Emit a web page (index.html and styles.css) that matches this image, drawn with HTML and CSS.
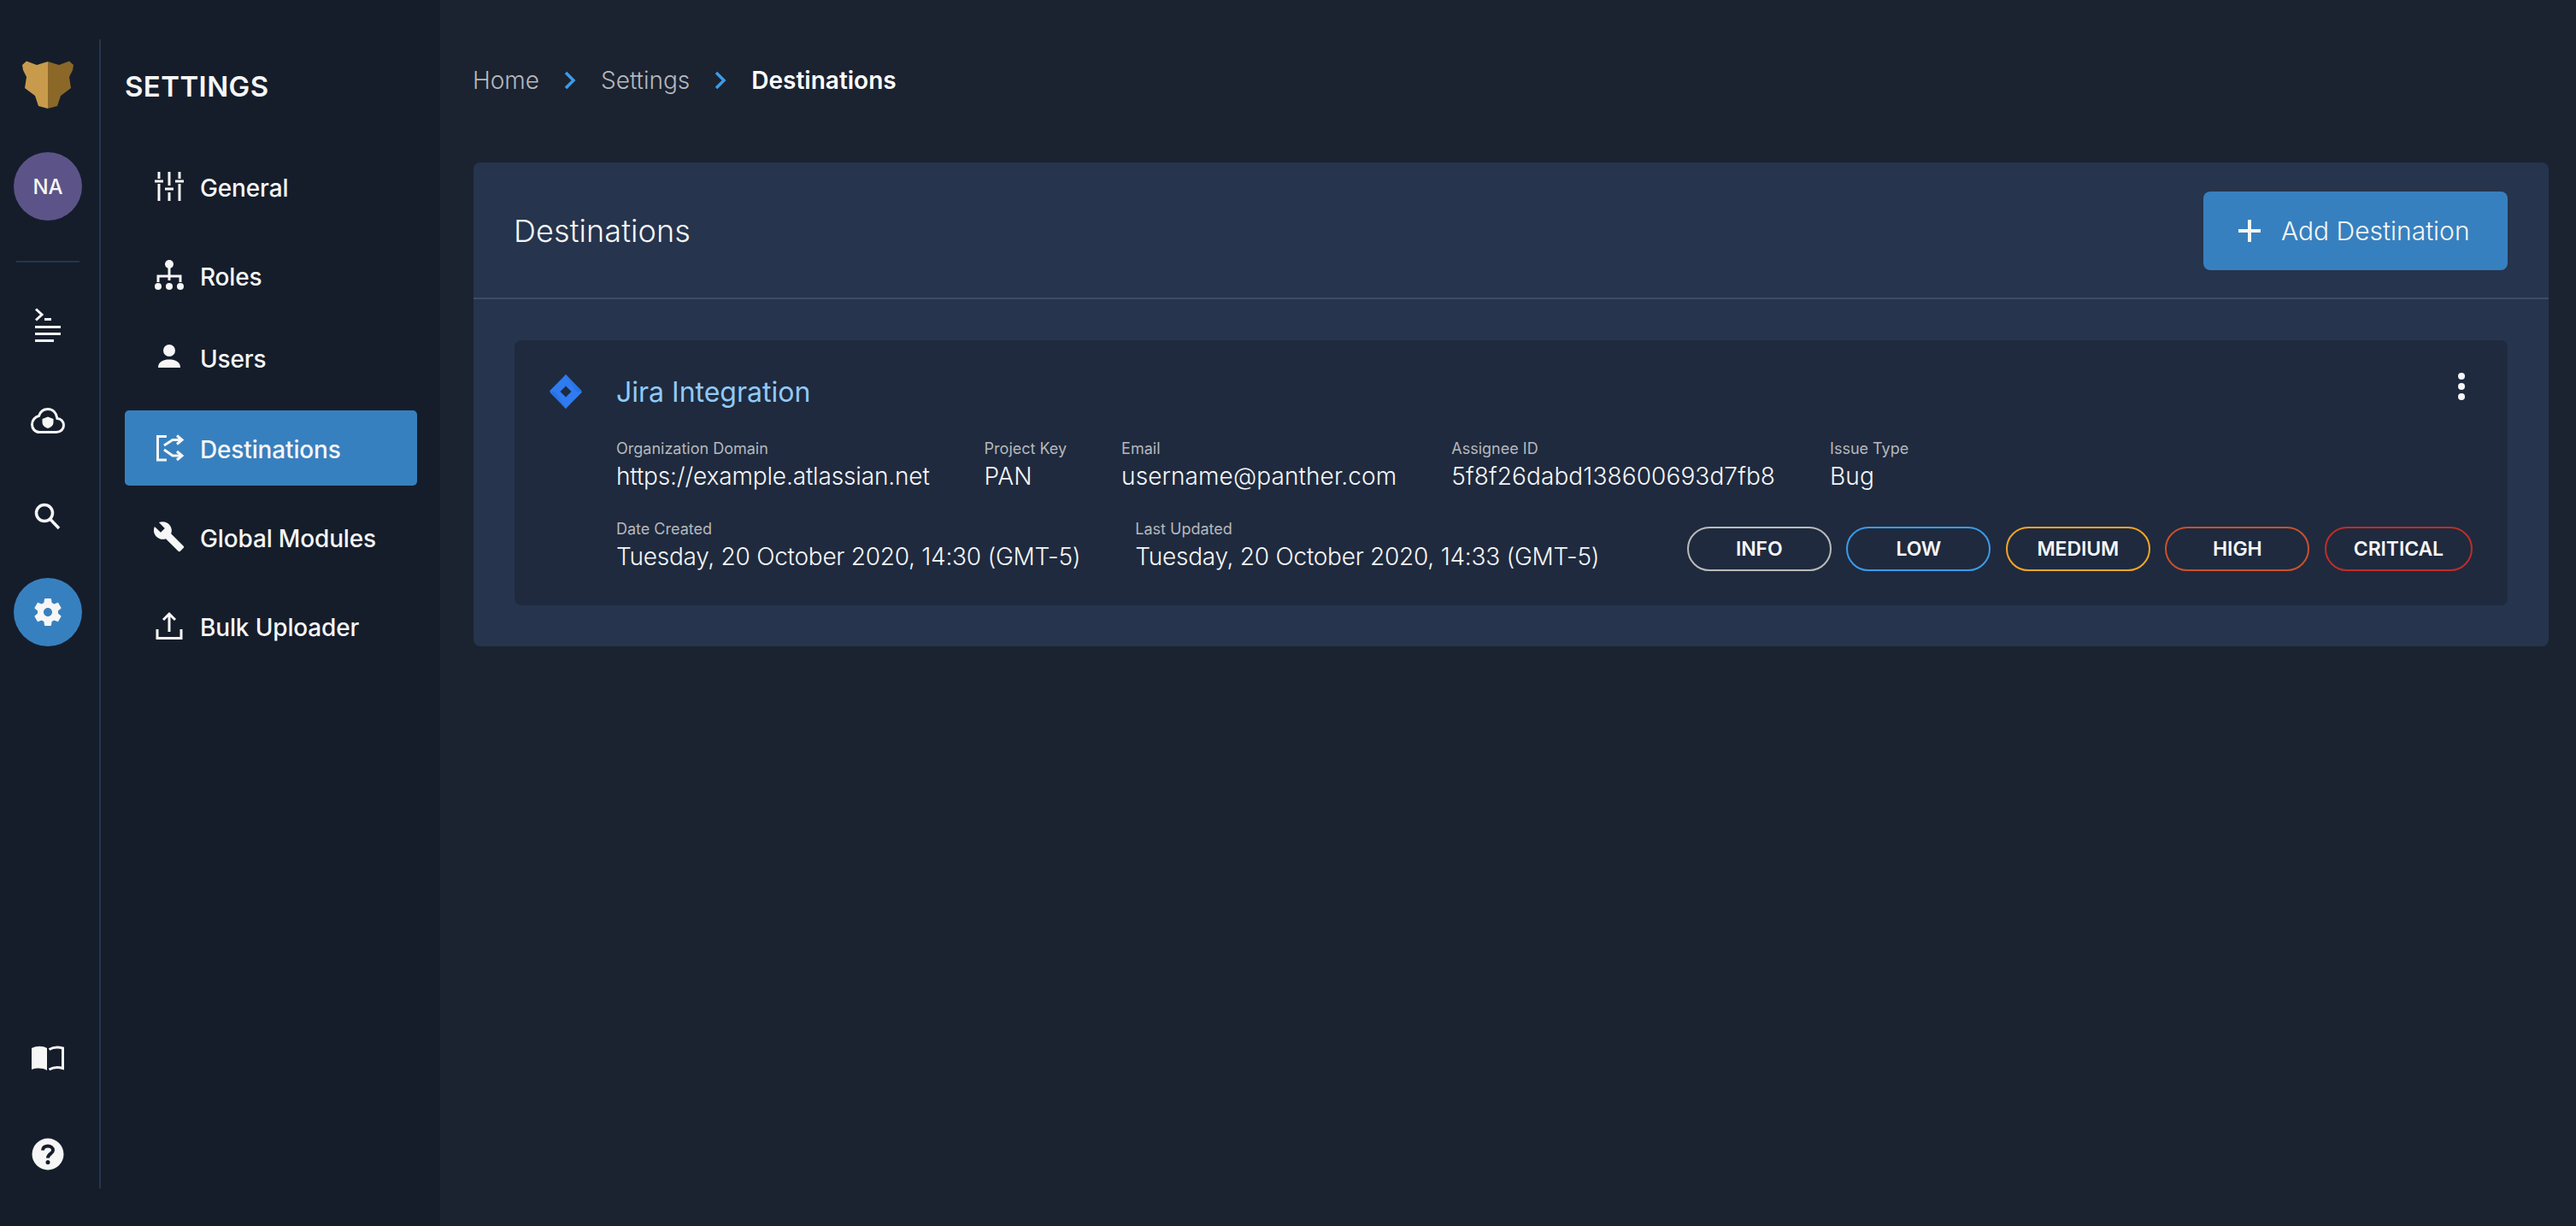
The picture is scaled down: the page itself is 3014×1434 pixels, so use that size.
FILE: index.html
```html
<!DOCTYPE html>
<html>
<head>
	<meta charset="utf-8">
	<title>Destinations</title>
	<link rel="stylesheet" href="styles.css">
</head>
<body>
	<aside class="sidebar">
		<div class="rail">
			<svg class="logo" viewBox="26 71 60 57">
				<path fill="#c89b4c" d="M56 72L43 76 31 71.500 26 76 27 82 31 90 29 103 41 112 45 124 56 127Z"/>
				<path fill="#8b6828" d="M56 72L69 76 81 71.500 86 76 85 82 81 90 83 103 71 112 67 124 56 127Z"/>
			</svg>
			<div class="avatar">NA</div>
			<div class="rail-divider"></div>
			<div class="rail-links">
				<a class="rail-link">
					<svg width="32" height="40" viewBox="0 0 32 40" fill="none" stroke="#f6f6f6" stroke-width="3">
						<path d="M2 1.500L9 8 2 14.500"/>
						<path d="M12 13.500H20M1 22.500H31M1 30.500H31M1 38.500H23"/>
					</svg>
				</a>
				<a class="rail-link">
					<svg width="40" height="30" viewBox="0 0 40 30">
						<path fill="none" stroke="#f6f6f6" stroke-width="3" d="M10 28.500H30C35 28.500 38.500 25 38.500 20.500C38.500 16 35 12.500 31 12.500C30 6 26 1.500 20 1.500C14.500 1.500 11 5 9.500 9.500C5 10.500 1.500 14.500 1.500 19.500C1.500 24.500 5 28.500 10 28.500Z"/>
						<path fill="#f6f6f6" d="M20 10.500L26.500 13V17C26.500 20.500 23.500 23 20 24C16.500 23 13.500 20.500 13.500 17V13Z"/>
					</svg>
				</a>
				<a class="rail-link">
					<svg width="32" height="32" viewBox="0 0 32 32" fill="none" stroke="#f6f6f6" stroke-width="3.500">
						<circle cx="12" cy="12" r="9.500"/>
						<path d="M18.500 19L29 30"/>
					</svg>
				</a>
				<a class="rail-link rail-link-active">
					<svg width="40" height="40" viewBox="0 0 24 24" fill="#f6f6f6">
						<path d="M19.140 12.940c.04-.3.06-.61.06-.94 0-.32-.02-.64-.07-.94l2.030-1.580c.18-.14.23-.41.12-.61l-1.920-3.320c-.12-.22-.37-.29-.59-.22l-2.390.96c-.5-.38-1.030-.7-1.620-.94l-.36-2.540c-.04-.24-.24-.41-.48-.41h-3.840c-.24 0-.43.17-.47.41l-.36 2.540c-.59.24-1.130.57-1.620.94l-2.390-.96c-.22-.08-.47 0-.59.22L2.740 8.870c-.12.21-.08.47.12.61l2.030 1.580c-.05.3-.09.63-.09.94s.02.64.07.94l-2.030 1.580c-.18.14-.23.41-.12.61l1.920 3.320c.12.22.37.29.59.22l2.390-.96c.5.38 1.030.7 1.620.94l.36 2.540c.05.24.24.41.48.41h3.840c.24 0 .44-.17.47-.41l.36-2.540c.59-.24 1.130-.56 1.620-.94l2.390.96c.22.08.47 0 .59-.22l1.920-3.320c.12-.22.07-.47-.12-.61l-2.010-1.580zM12 15c-1.650 0-3-1.350-3-3s1.350-3 3-3 3 1.350 3 3-1.350 3-3 3z"/>
					</svg>
				</a>
			</div>
			<div class="rail-links rail-bottom">
				<a class="rail-link">
					<svg width="38" height="30" viewBox="0 0 38 30">
						<path fill="#f6f6f6" d="M0 3C6 0 13 0 18 3V29C13 26 6 26 0 28Z"/>
						<path fill="none" stroke="#f6f6f6" stroke-width="3" d="M20.500 4.500C25 2 31 1.500 36.500 3V26.500C31 25 25 25.500 20.500 28"/>
					</svg>
				</a>
				<a class="rail-link">
					<svg width="38" height="38" viewBox="0 0 38 38">
						<circle cx="19" cy="19" r="18.500" fill="#f6f6f6"/>
						<path fill="none" stroke="#151d2b" stroke-width="4" d="M13 14.500C13 11 15.800 9.500 19 9.500C22.200 9.500 25 11.300 25 14.500C25 18.500 19 18.500 19 23.500"/>
						<circle cx="19" cy="28.500" r="2.500" fill="#151d2b"/>
					</svg>
				</a>
			</div>
		</div>
		<nav class="settings-nav">
			<h2 class="settings-title">SETTINGS</h2>
			<a class="nav-item">
				<svg class="nav-icon" viewBox="0 0 36 36" fill="none" stroke="#f6f6f6" stroke-width="3">
					<path d="M6 1V9M1 12H11M6 15V35M18 1V17M13 21H23M18 25V35M30 1V9M25 12H35M30 15V35"/>
				</svg>
				General
			</a>
			<a class="nav-item">
				<svg class="nav-icon" viewBox="0 0 36 36" fill="#f6f6f6">
					<circle cx="18" cy="5" r="5"/>
					<circle cx="5" cy="31" r="4"/>
					<circle cx="18" cy="31" r="4"/>
					<circle cx="31" cy="31" r="4"/>
					<path fill="none" stroke="#f6f6f6" stroke-width="3" d="M18 9V24M5 26V19H31V26"/>
				</svg>
				Roles
			</a>
			<a class="nav-item nav-item-tight">
				<svg class="nav-icon" viewBox="0 0 36 36" fill="#f6f6f6">
					<circle cx="18" cy="10" r="7"/>
					<path d="M5 30C5 23 11 20.500 18 20.500C25 20.500 31 23 31 30Z"/>
				</svg>
				Users
			</a>
			<a class="nav-item nav-item-active">
				<svg class="nav-icon" viewBox="0 0 36 36" fill="none" stroke="#f6f6f6" stroke-width="3">
					<path d="M15 4.500H4.500V32H15"/>
					<path d="M12 15L22 8.500H32M12 20L22 27H32"/>
					<path d="M27 3.500L33 8.500 27 13.500M27 22L33 27 27 32"/>
				</svg>
				Destinations
			</a>
			<a class="nav-item">
				<svg class="nav-icon nav-icon-wrench" viewBox="1 1 22.500 22.500" fill="#f6f6f6">
					<path d="M22.700 19l-9.100-9.100c.9-2.300.4-5-1.500-6.900-2-2-5-2.400-7.400-1.300L9 6 6 9 1.600 4.700C.4 7.100.9 10.100 2.900 12.100c1.900 1.900 4.600 2.400 6.900 1.500l9.100 9.100c.4.4 1 .4 1.400 0l2.300-2.300c.5-.4.5-1.100.1-1.400z"/>
				</svg>
				Global Modules
			</a>
			<a class="nav-item">
				<svg class="nav-icon" viewBox="0 0 36 36" fill="none" stroke="#f6f6f6" stroke-width="3">
					<path d="M18 25V4M11 11L18 4 25 11"/>
					<path d="M4 22V32.500H32V22"/>
				</svg>
				Bulk Uploader
			</a>
		</nav>
	</aside>

	<main class="content">
		<div class="breadcrumbs">
			<span class="crumb">Home</span>
			<svg class="crumb-sep" viewBox="0 0 14 22" fill="none" stroke="#3c9be8" stroke-width="3.500"><path d="M2 2L11 11 2 20"/></svg>
			<span class="crumb">Settings</span>
			<svg class="crumb-sep" viewBox="0 0 14 22" fill="none" stroke="#3c9be8" stroke-width="3.500"><path d="M2 2L11 11 2 20"/></svg>
			<span class="crumb crumb-current">Destinations</span>
		</div>

		<section class="panel">
			<header class="panel-head">
				<h1 class="panel-title">Destinations</h1>
				<button class="add-btn">
					<svg width="28" height="28" viewBox="0 0 28 28" stroke="#f6f6f6" stroke-width="4"><path d="M14 1V27M1 14H27"/></svg>
					Add Destination
				</button>
			</header>
			<div class="panel-body">
				<article class="card">
					<svg class="jira-icon" viewBox="0 0 38 40">
						<defs>
							<linearGradient id="jiraA" x1="0.8" y1="0.2" x2="0.3" y2="0.5">
								<stop offset="0" stop-color="#1f5fd0"/>
								<stop offset="1" stop-color="#2f7bf0"/>
							</linearGradient>
							<linearGradient id="jiraB" x1="0.2" y1="0.8" x2="0.7" y2="0.5">
								<stop offset="0" stop-color="#1f5fd0"/>
								<stop offset="1" stop-color="#2f7bf0"/>
							</linearGradient>
						</defs>
						<path fill="#2f7bf0" d="M19 0L37 18.500Q38 20 37 21.500L19 40 1 21.500Q0 20 1 18.500Z"/>
						<path fill="url(#jiraA)" d="M19 0C16 5 16.500 10 19 13.500L25.500 20 37 20Z"/>
						<path fill="url(#jiraB)" d="M19 40C22 35 21.500 30 19 26.500L12.500 20 1 20Z"/>
						<path fill="#2f7bf0" d="M25.500 20H38L37 21.500 30 28.500ZM12.500 20H0L1 18.500 8 11.500Z"/>
						<path fill="#1f2a3e" d="M19 13.500L25.500 20 19 26.500 12.500 20Z"/>
					</svg>
					<div class="card-main">
						<div class="card-head">
							<a class="card-title">Jira Integration</a>
							<svg class="dots" width="8" height="32" viewBox="0 0 8 32" fill="#f6f6f6">
								<circle cx="4" cy="4" r="4"/>
								<circle cx="4" cy="16" r="4"/>
								<circle cx="4" cy="28" r="4"/>
							</svg>
						</div>
						<div class="fields">
							<div class="field"><div class="field-label">Organization Domain</div><div class="field-value field-url">https://example.atlassian.net</div></div>
							<div class="field"><div class="field-label">Project Key</div><div class="field-value">PAN</div></div>
							<div class="field"><div class="field-label">Email</div><div class="field-value">username@panther.com</div></div>
							<div class="field"><div class="field-label">Assignee ID</div><div class="field-value">5f8f26dabd138600693d7fb8</div></div>
							<div class="field"><div class="field-label">Issue Type</div><div class="field-value">Bug</div></div>
						</div>
						<div class="fields fields-bottom">
							<div class="field"><div class="field-label">Date Created</div><div class="field-value">Tuesday, 20 October 2020, 14:30 (GMT-5)</div></div>
							<div class="field"><div class="field-label">Last Updated</div><div class="field-value">Tuesday, 20 October 2020, 14:33 (GMT-5)</div></div>
							<div class="badges">
								<span class="badge badge-info">INFO</span>
								<span class="badge badge-low">LOW</span>
								<span class="badge badge-medium">MEDIUM</span>
								<span class="badge badge-high">HIGH</span>
								<span class="badge badge-critical">CRITICAL</span>
							</div>
						</div>
					</div>
				</article>
			</div>
		</section>
	</main>
</body>
</html>
```

FILE: styles.css
```css
/* Page */

* {
	box-sizing: border-box;
}

html, body {
	height: 100%;
}

body {
	margin: 0;
	display: flex;
	overflow: hidden;
	background-color: #1b2331;
	color: #f6f6f6;
	font-family: "Inter", "Liberation Sans", sans-serif;
}

/* Sidebar */

.sidebar {
	width: 515px;
	flex: none;
	display: flex;
	background-color: #151d2b;
}

.rail {
	width: 118px;
	flex: none;
	margin: 46px 0 44px;
	padding: 25px 20px 0 16px;
	display: flex;
	flex-direction: column;
	align-items: center;
	border-right: 2px solid #26344d;
}

.logo {
	width: 60px;
	height: 57px;
	margin-bottom: 50px;
}

.avatar {
	width: 80px;
	height: 80px;
	border-radius: 50%;
	background-color: #5c5488;
	display: flex;
	align-items: center;
	justify-content: center;
	font-size: 24px;
	font-weight: 500;
}

.rail-divider {
	width: 74px;
	height: 2px;
	margin: 47px 0 33px;
	background-color: #26344d;
}

.rail-links {
	display: flex;
	flex-direction: column;
	gap: 32px;
}

.rail-bottom {
	margin-top: auto;
}

.rail-link {
	width: 80px;
	height: 80px;
	border-radius: 50%;
	display: flex;
	align-items: center;
	justify-content: center;
}

.rail-link-active {
	background-color: #3780bf;
}

.settings-nav {
	width: 342px;
	margin-left: 28px;
}

.settings-title {
	margin: 0;
	padding-top: 80px;
	height: 176px;
	font-size: 33px;
	line-height: 42px;
	font-weight: 600;
	letter-spacing: 0.4px;
}

.nav-item {
	height: 88px;
	margin-bottom: 16px;
	padding-left: 34px;
	display: flex;
	align-items: center;
	gap: 18px;
	border-radius: 5px;
	font-size: 28px;
	font-weight: 500;
	letter-spacing: -0.15px;
}

.nav-item-tight {
	margin-top: -8px;
}

.nav-item-active {
	margin-bottom: 18px;
	padding-top: 4px;
	background-color: #3780bf;
}

.nav-icon {
	width: 36px;
	height: 36px;
	margin-bottom: 4px;
	flex: none;
}

/* Content */

.content {
	flex: 1;
	padding: 0 32px 0 39px;
}

.breadcrumbs {
	height: 190px;
	margin-left: -1px;
	padding-bottom: 2px;
	display: flex;
	align-items: center;
	font-size: 28px;
}

.crumb {
	color: #b6b8bc;
	font-weight: 300;
}

.crumb-current {
	color: #fff;
	font-weight: 600;
}

.crumb-sep {
	width: 14px;
	height: 22px;
	margin: 0 29px;
}

.panel {
	border-radius: 8px;
	background-color: #26344d;
}

.panel-head {
	height: 160px;
	padding: 2px 48px 0 47px;
	display: flex;
	align-items: center;
	justify-content: space-between;
	border-bottom: 2px solid #3e4c67;
}

.panel-title {
	margin: 0;
	font-size: 36px;
	font-weight: 300;
	letter-spacing: 0.1px;
}

.add-btn {
	width: 356px;
	height: 92px;
	padding: 0 0 0 40px;
	display: flex;
	align-items: center;
	gap: 23px;
	border: 0;
	border-radius: 8px;
	background-color: #3780bf;
	color: #f6f6f6;
	font-family: inherit;
	font-size: 30px;
	font-weight: 300;
}

.panel-body {
	padding: 48px;
}

.card {
	height: 310px;
	padding: 38px 41px 40px;
	display: flex;
	border-radius: 8px;
	background-color: #1f2a3e;
}

.jira-icon {
	width: 38px;
	height: 40px;
	margin: 2px 40px 0 0;
	flex: none;
}

.card-main {
	flex: 1;
}

.card-head {
	height: 44px;
	display: flex;
	align-items: flex-start;
	justify-content: space-between;
}

.card-title {
	padding-top: 1px;
	font-size: 32px;
	line-height: 44px;
	color: #90caf9;
}

.dots {
	margin-right: 9px;
}

.fields {
	margin-top: 33px;
	display: flex;
	gap: 64px;
}

.fields-bottom {
	margin-top: 32px;
	align-items: flex-end;
}

.field-label {
	height: 24px;
	font-size: 18px;
	line-height: 24px;
	color: #b6b8bc;
}

.field-value {
	height: 38px;
	padding-top: 2px;
	font-size: 28px;
	line-height: 36px;
	font-weight: 300;
	letter-spacing: 0.1px;
	white-space: nowrap;
}

.field-url {
	letter-spacing: -0.15px;
}

.fields-bottom .field-value {
	letter-spacing: -0.25px;
}

.badges {
	margin: 0 0 1px auto;
	display: flex;
	gap: 17.5px;
}

.badge {
	min-width: 169px;
	height: 52px;
	padding: 0 32px;
	display: flex;
	align-items: center;
	justify-content: center;
	border: 2px solid;
	border-radius: 26px;
	font-size: 23px;
	font-weight: 600;
	letter-spacing: -0.1px;
}

.badge-info {
	border-color: #bbbbbb;
}

.badge-low {
	border-color: #3c9be8;
}

.badge-medium {
	border-color: #f6a623;
}

.badge-high {
	border-color: #c9512d;
}

.badge-critical {
	border-color: #be2e28;
}
```
